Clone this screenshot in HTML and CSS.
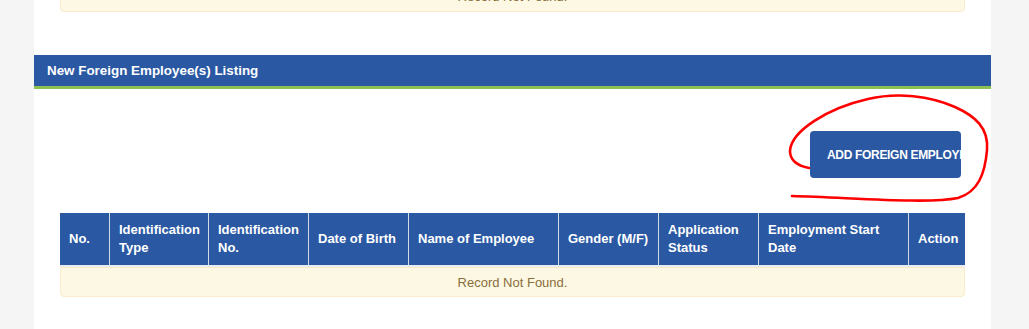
FILE: index.html
```html
<!DOCTYPE html>
<html lang="en">
<head>
  <meta charset="UTF-8">
  <title>New Foreign Employee(s) Listing</title>
  <link rel="stylesheet" href="styles.css">
</head>
<body>

  <div class="page">
    <div class="panel">

      <!-- previous listing (scrolled off) -->
      <div class="inner">
        <div class="alert alert-top">Record Not Found.</div>
      </div>

      <!-- New Foreign Employee(s) Listing -->
      <section class="listing">
        <div class="listing-head">New Foreign Employee(s) Listing</div>
        <div class="listing-body">
          <div class="toolbar">
            <a class="btn-add" href="#">ADD FOREIGN EMPLOYEE</a>
          </div>

          <table class="grid">
            <colgroup>
              <col style="width:49px">
              <col style="width:99px">
              <col style="width:100px">
              <col style="width:100px">
              <col style="width:150px">
              <col style="width:100px">
              <col style="width:100px">
              <col style="width:150px">
              <col>
            </colgroup>
            <thead>
              <tr>
                <th>No.</th>
                <th>Identification Type</th>
                <th>Identification No.</th>
                <th>Date of Birth</th>
                <th>Name of Employee</th>
                <th>Gender (M/F)</th>
                <th>Application Status</th>
                <th>Employment Start Date</th>
                <th>Action</th>
              </tr>
            </thead>
            <tbody>
              <tr>
                <td class="empty" colspan="9">Record Not Found.</td>
              </tr>
            </tbody>
          </table>
        </div>
      </section>

    </div>
  </div>

  <!-- red marker circle drawn over the button -->
  <svg class="scribble" width="1029" height="329" viewBox="0 0 1029 329">
    <path d="M809 168 C799 166 790 162 790 151 C791 131 828 108 868 99 C898 92 930 96 955 107 C975 116 989 128 987 150 C985 174 978 192 958 198 C928 204 858 198 792 196" />
  </svg>

</body>
</html>
```

FILE: styles.css
```css
/* Global */
body {
  margin: 0;
  font-family: "Liberation Sans", Arial, sans-serif;
  background: #f6f5f5;
  overflow: hidden;
  position: relative;
}

.page {
  display: flex;
  padding-left: 34px;
  min-height: 100vh;
}

.panel {
  width: 957px;
  background: #fff;
  min-height: 100vh;
}

.inner {
  padding: 0 26px;
}

/* Alerts */
.alert {
  background: #fcf8e3;
  border: 1px solid #faebcc;
  border-radius: 4px;
  color: #8a6d3b;
  font-size: 13px;
  text-align: center;
}

.alert-top {
  height: 29px;
  line-height: 29px;
  margin-top: -19px;
}

/* Listing block */
.listing {
  margin-top: 43px;
}

.listing-head {
  background: #2a58a3;
  border-bottom: 3px solid #8cc152;
  color: #fff;
  font-size: 13.4px;
  font-weight: bold;
  height: 31px;
  line-height: 31px;
  padding-left: 13px;
}

.listing-body {
  padding: 42px 26px 0;
}

.toolbar {
  display: flex;
  justify-content: flex-end;
  padding-right: 5px;
  margin-right: -1px;
  overflow: hidden;
  margin-bottom: 35px;
}

.btn-add {
  display: flex;
  align-items: center;
  box-sizing: border-box;
  width: 151px;
  height: 47px;
  flex-shrink: 0;
  padding-left: 17px;
  background: #2a58a3;
  color: #fff;
  border-radius: 4px;
  font-size: 12px;
  font-weight: bold;
  letter-spacing: -0.32px;
  text-decoration: none;
  white-space: nowrap;
}

/* Table */
.grid {
  width: 905px;
  border-collapse: separate;
  border-spacing: 0;
  table-layout: fixed;
  font-size: 13px;
}

.grid th {
  background: #2a58a3;
  color: #fff;
  font-weight: bold;
  text-align: left;
  vertical-align: middle;
  line-height: 18px;
  height: 36px;
  padding: 8px 9px;
  border-left: 1px solid #d3dbe8;
  border-bottom: 2px solid #e9ecf1;
}

.grid th:first-child {
  border-left: none;
}

.grid td.empty {
  background: #fcf8e3;
  border: 1px solid #faebcc;
  border-radius: 0 0 4px 4px;
  color: #8a6d3b;
  text-align: center;
  height: 28px;
  padding: 0;
}

/* Red marker */
.scribble {
  position: absolute;
  top: 0;
  left: 0;
  pointer-events: none;
}

.scribble path {
  fill: none;
  stroke: #f00;
  stroke-width: 2.6;
  stroke-linecap: round;
}
```
